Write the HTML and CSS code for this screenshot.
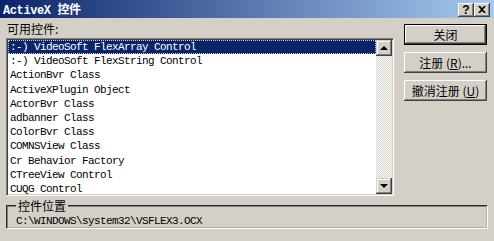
FILE: index.html
```html
<!DOCTYPE html>
<html lang="zh-CN">
<head>
    <meta charset="UTF-8">
    <title>ActiveX 控件</title>
    <link rel="stylesheet" href="styles.css">
</head>
<body>
    <div class="window">
        <div class="titlebar">
            <span class="title">ActiveX 控件</span>
            <div class="title-buttons">
                <span class="tbtn">?</span>
                <span class="tbtn">
                    <svg width="8" height="7" viewBox="0 0 8 7"><path d="M0 0h2l2 2 2-2h2L5 3.5 8 7H6L4 5 2 7H0l3-3.5z" fill="#000"/></svg>
                </span>
            </div>
        </div>

        <div class="content">
            <div class="left">
                <div class="label">可用控件:</div>
                <div class="listbox">
                    <ul class="items">
                        <li class="selected">:-) VideoSoft FlexArray Control</li>
                        <li>:-) VideoSoft FlexString Control</li>
                        <li>ActionBvr Class</li>
                        <li>ActiveXPlugin Object</li>
                        <li>ActorBvr Class</li>
                        <li>adbanner Class</li>
                        <li>ColorBvr Class</li>
                        <li>COMNSView Class</li>
                        <li>Cr Behavior Factory</li>
                        <li>CTreeView Control</li>
                        <li>CUQG Control</li>
                    </ul>
                    <div class="scrollbar">
                        <div class="sbtn"><span class="arrow up"></span></div>
                        <div class="track"></div>
                        <div class="sbtn"><span class="arrow down"></span></div>
                    </div>
                </div>
            </div>
            <div class="right">
                <button class="btn default">关闭</button>
                <button class="btn">注册 (<u>R</u>)...</button>
                <button class="btn">撤消注册 (<u>U</u>)</button>
            </div>
        </div>

        <fieldset class="group">
            <legend>控件位置</legend>
            <div class="path">C:\WINDOWS\system32\VSFLEX3.OCX</div>
        </fieldset>
    </div>
</body>
</html>
```

FILE: styles.css
```css
body {
    margin: 0;
    padding: 0;
    background-color: #d4d0c8;
    font-family: "Noto Sans CJK SC", "Liberation Sans", sans-serif;
    font-size: 12px;
    color: #000;
}
.window {
    width: 494px;
    height: 241px;
    overflow: hidden;
}
.titlebar {
    height: 18px;
    display: flex;
    align-items: center;
    justify-content: space-between;
    background: linear-gradient(to right, #0a246a, #a6caf0);
    padding: 0 4px 0 3px;
}
.title {
    color: #fff;
    font-family: "Liberation Mono", "Noto Sans CJK SC", monospace;
    font-weight: bold;
    font-size: 12px;
    letter-spacing: -0.4px;
}
.title-buttons {
    display: flex;
    margin-top: 1px;
}
.tbtn {
    width: 16px;
    height: 14px;
    box-sizing: border-box;
    display: flex;
    align-items: center;
    justify-content: center;
    background-color: #d4d0c8;
    font-family: "Liberation Sans", sans-serif;
    font-weight: bold;
    font-size: 12px;
    line-height: 14px;
    box-shadow: inset -1px -1px #404040, inset 1px 1px #fff, inset -2px -2px #808080;
}
.content {
    display: flex;
    padding: 0 6px;
}
.left {
    width: 388px;
}
.label {
    height: 20px;
    line-height: 21px;
    padding-left: 1px;
}
.listbox {
    height: 158px;
    box-sizing: border-box;
    background-color: #fff;
    border: 1px solid;
    border-color: #808080 #fff #fff #808080;
    box-shadow: inset 1px 1px #404040, inset -1px -1px #d4d0c8;
    display: flex;
    padding: 1px;
}
.items {
    list-style: none;
    margin: 0;
    padding: 0;
    flex: 1;
    font-family: "Liberation Mono", monospace;
    font-size: 11px;
    letter-spacing: -0.6px;
}
.items li {
    height: 14.2px;
    line-height: 14.2px;
    padding-left: 2px;
    white-space: nowrap;
}
.items li.selected {
    background-color: #0a246a;
    color: #fff;
    outline: 1px dotted #d4d0c8;
    outline-offset: -1px;
}
.scrollbar {
    width: 16px;
    display: flex;
    flex-direction: column;
}
.track {
    flex: 1;
    background: repeating-conic-gradient(#fff 0 25%, #d4d0c8 0 50%) 0 0 / 2px 2px;
}
.sbtn {
    height: 16px;
    background-color: #d4d0c8;
    display: flex;
    align-items: center;
    justify-content: center;
    box-shadow: inset -1px -1px #404040, inset 1px 1px #d4d0c8, inset -2px -2px #808080, inset 2px 2px #fff;
}
.arrow {
    width: 0;
    height: 0;
    border-left: 4px solid transparent;
    border-right: 4px solid transparent;
}
.arrow.up {
    border-bottom: 4px solid #000;
}
.arrow.down {
    border-top: 4px solid #000;
}
.right {
    display: flex;
    flex-direction: column;
    gap: 7px;
    margin-left: 10px;
    padding-top: 6px;
}
.btn {
    width: 83px;
    height: 21px;
    padding: 0;
    border: none;
    background-color: #d4d0c8;
    font-family: "Noto Sans CJK SC", "Liberation Sans", sans-serif;
    font-size: 12px;
    color: #000;
    box-shadow: inset -1px -1px #404040, inset 1px 1px #fff, inset -2px -2px #808080, inset 2px 2px #d4d0c8;
}
.btn.default {
    border: 1px solid #000;
}
.group {
    margin: 4px 6px 0 6px;
    height: 23px;
    padding: 2px 8px 0 8px;
    border: 2px groove;
    border-color: #808080 #fff #fff #808080;
}
.group legend {
    padding: 0 2px;
    font-size: 12px;
    line-height: 12px;
}
.path {
    font-family: "Liberation Mono", monospace;
    font-size: 11px;
    letter-spacing: -0.6px;
    line-height: 14px;
}
```
